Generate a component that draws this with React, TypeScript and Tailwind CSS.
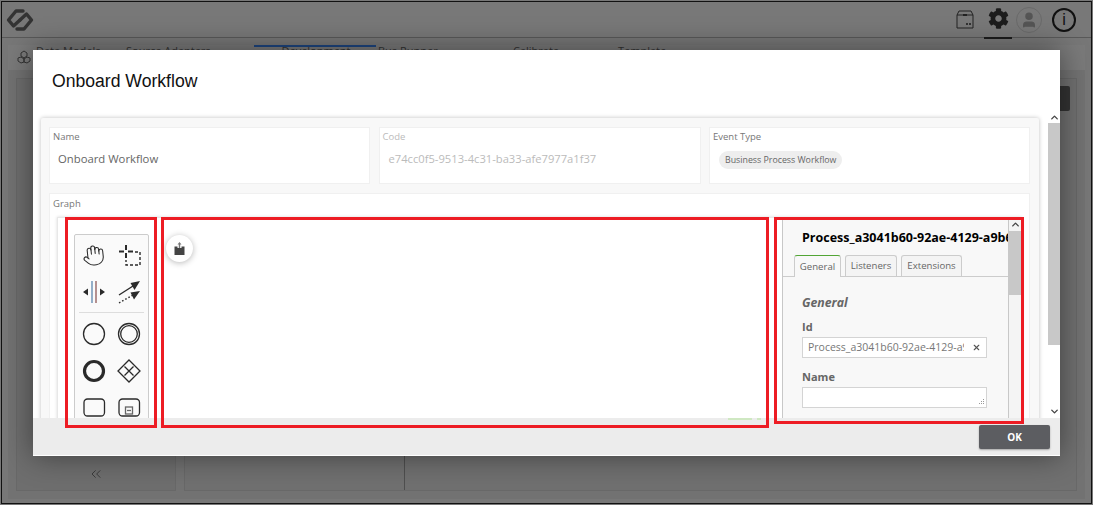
import React from "react";
import { Hand, ChevronsLeft, ChevronUp, ChevronDown, X, User } from "lucide-react";
import { FaCog } from "react-icons/fa";

function Field({ label, muted, children }: { label: string; muted?: boolean; children: React.ReactNode }) {
  return (
    <div className="h-[57px] border border-[#f0f0f0] bg-white pl-[3px] pt-[2px]">
      <div className={`text-[9.5px] leading-[13px] ${muted ? "text-[#bbb]" : "text-[#777]"}`}>{label}</div>
      {children}
    </div>
  );
}

function Tool({ children }: { children: React.ReactNode }) {
  return (
    <svg width="30" height="30" viewBox="0 0 30 30" fill="none" stroke="#2a2a2a" strokeWidth="1.3">
      {children}
    </svg>
  );
}

function Palette() {
  return (
    <div className="ml-[16px] mt-[16px] h-[200px] w-[75px] shrink-0 rounded-[2px] border border-[#ccc] bg-[#fafafa] pt-[5px]">
      <div className="grid grid-cols-2 justify-items-center gap-y-[7px] px-px">
        <div className="flex h-[30px] items-center justify-center">
          <Hand size={23} strokeWidth={1.1} color="#2a2a2a" className="-rotate-6" />
        </div>
        <Tool>
          <path d="M12 5v5M12 13v5M5 11.5h5M14 11.5h5" strokeWidth="2" />
          <path d="M21 12h5v13H12v-5" strokeDasharray="3 2" strokeWidth="1.4" />
        </Tool>
        <Tool>
          <path d="M13 4v22" stroke="#3f6f9f" strokeWidth="1.1" />
          <path d="M17 4v22" stroke="#7a3a3a" strokeWidth="1.1" />
          <path d="M9 15H6M21 15h3" strokeWidth="1.6" />
          <path d="M4 15l5-3.5v7zM26 15l-5-3.5v7z" fill="#2a2a2a" stroke="none" />
        </Tool>
        <Tool>
          <path d="M5 18L19 9" strokeWidth="1.4" />
          <path d="M26 4l-9.5 2 4 7z" fill="#2a2a2a" stroke="none" />
          <path d="M5 26L19 18" strokeDasharray="1.6 2" strokeWidth="1.4" />
          <path d="M26 14l-9.5 1.5 3.5 7z" fill="#2a2a2a" stroke="none" />
        </Tool>
      </div>
      <div className="mx-[4px] mt-[5px] h-px bg-[#ddd]" />
      <div className="mt-[6px] grid grid-cols-2 justify-items-center gap-y-[7px] px-px">
        <Tool><circle cx="15" cy="15" r="10.5" /></Tool>
        <Tool>
          <circle cx="15" cy="15" r="10.5" />
          <circle cx="15" cy="15" r="8.3" />
        </Tool>
        <Tool><circle cx="15" cy="15" r="9.5" strokeWidth="3.2" /></Tool>
        <Tool>
          <path d="M15 4l11 11-11 11L4 15z" />
          <path d="M10.5 10.5l9 9M19.5 10.5l-9 9" />
        </Tool>
        <Tool><rect x="5" y="6" width="20.5" height="17" rx="3.5" /></Tool>
        <Tool>
          <rect x="5" y="6" width="20.5" height="17" rx="3.5" />
          <rect x="11.5" y="14" width="7" height="7" stroke="#666" />
          <path d="M13 17.5h4" stroke="#666" />
        </Tool>
      </div>
    </div>
  );
}

function Canvas() {
  return (
    <div className="relative min-w-0 flex-1 bg-white">
      <div className="absolute left-[17px] top-[17px] flex h-[27px] w-[27px] items-center justify-center rounded-full bg-white shadow-[0_1px_6px_rgba(0,0,0,0.28)]">
        <svg width="11" height="13" viewBox="0 0 11 13">
          <path d="M0.5 4.5h3v1.5h4V4.5h3V13h-10z" fill="#444" />
          <path d="M5.5 0L3.5 2.5h1.3V6h1.4V2.5h1.3z" fill="#777" />
        </svg>
      </div>
    </div>
  );
}

function PropTab({ label, className, active }: { label: string; className: string; active?: boolean }) {
  return (
    <div
      className={`flex items-center justify-center rounded-t-[3px] pt-px text-[9.6px] text-[#666] ${className} ${
        active
          ? "-mb-px h-[22px] border border-b-0 border-[#ccc] border-t-[#52a535] bg-[#f8f8f8]"
          : "h-[21px] border border-b-0 border-[#ccc] bg-[#f4f4f4]"
      }`}
    >
      {label}
    </div>
  );
}

function Properties() {
  return (
    <div className="flex h-full w-[240px] shrink-0 border-x border-[#c8c8c8] bg-[#f8f8f8]">
      <div className="min-w-0 flex-1 overflow-hidden">
        <div className="overflow-hidden whitespace-nowrap pl-[19px] pt-[11px] text-[12.5px] font-bold leading-[18px] text-black">
          Process_a3041b60-92ae-4129-a9b6c
        </div>
        <div className="mt-[7px] flex h-[23px] items-end gap-[4px] border-b border-[#ccc] pl-[11px]">
          <PropTab label="General" className="w-[47px]" active />
          <PropTab label="Listeners" className="w-[52px]" />
          <PropTab label="Extensions" className="w-[61px]" />
        </div>
        <div className="px-[19px]">
          <div className="pt-[17px] text-[12.3px] font-bold italic leading-[18px] text-[#666]">General</div>
          <div className="mt-[8px] text-[11px] font-bold leading-[14px] text-[#666]">Id</div>
          <div className="mt-[3px] flex h-[21px] w-[185px] items-center border border-[#d4d4d4] bg-white pl-[5px] pr-[5px]">
            <div className="min-w-0 flex-1 overflow-hidden whitespace-nowrap text-[10.5px] text-[#777]">
              Process_a3041b60-92ae-4129-a9b6c
            </div>
            <X size={9} strokeWidth={3} color="#555" className="ml-[8px] shrink-0" />
          </div>
          <div className="mt-[12px] text-[11px] font-bold leading-[14px] text-[#666]">Name</div>
          <div className="relative mt-[3px] h-[21px] w-[185px] border border-[#d4d4d4] bg-white">
            <svg width="8" height="8" viewBox="0 0 8 8" className="absolute bottom-[1px] right-[1px]">
              <path d="M6 1h1v1H6zM6 3h1v1H6zM4 3h1v1H4zM6 5h1v1H6zM4 5h1v1H4zM2 5h1v1H2z" fill="#999" />
            </svg>
          </div>
        </div>
      </div>
      <div className="flex w-[13px] shrink-0 flex-col items-center border-l border-[#c8c8c8] bg-[#f4f4f4]">
        <ChevronUp size={11} strokeWidth={3} color="#444" className="h-[13px] shrink-0" />
        <div className="h-[64px] w-full bg-[#c8c8c8]" />
      </div>
    </div>
  );
}

function Modal() {
  return (
    <div className="absolute left-[33px] top-[50px] flex h-[406px] w-[1027px] flex-col bg-white shadow-[0_0_28px_rgba(0,0,0,0.45)]">
      <div className="flex h-[60px] shrink-0 items-center pl-[19px] pt-[2px] font-['Liberation_Sans',sans-serif] text-[17.6px] text-[#111]">
        Onboard Workflow
      </div>
      <div className="flex min-h-0 flex-1 overflow-hidden font-['Open_Sans',sans-serif]">
        <div className="min-w-0 flex-1 pl-[8px] pr-[8px] pt-[8px]">
          <div className="h-[400px] w-[998px] rounded-[2px] bg-[#f8f8f8] pl-[8px] pr-[9px] pt-[9px] shadow-[0_0_4px_rgba(0,0,0,0.25)]">
            <div className="grid grid-cols-[321px_322px_321px] justify-between">
              <Field label="Name">
                <div className="pl-[5px] pt-[8px] text-[11.3px] leading-[16px] text-[#666]">Onboard Workflow</div>
              </Field>
              <Field label="Code" muted>
                <div className="pl-[6px] pt-[8px] text-[11.2px] leading-[16px] text-[#bbb]">e74cc0f5-9513-4c31-ba33-afe7977a1f37</div>
              </Field>
              <Field label="Event Type">
                <div className="ml-[6px] mt-[8px] inline-block rounded-full bg-[#eee] px-[6px] text-[8.8px] leading-[18px] text-[#666]">
                  Business Process Workflow
                </div>
              </Field>
            </div>
            <div className="mt-[9px] h-[300px] border border-[#f0f0f0] bg-white pl-[7px] pr-[7px] pt-[3px]">
              <div className="-ml-[4px] text-[9.5px] leading-[13px] text-[#777]">Graph</div>
              <div className="mt-[7px] flex h-[260px] border-l border-t border-[#e8e8e8] shadow-[0_0_3px_rgba(0,0,0,0.15)]">
                <Palette />
                <Canvas />
                <Properties />
              </div>
            </div>
          </div>
        </div>
        <div className="flex w-[12px] shrink-0 flex-col items-center bg-white">
          <ChevronUp size={11} strokeWidth={3} color="#444" className="mt-[2px] h-[11px] shrink-0" />
          <div className="h-[222px] w-full bg-[#c8c8c8]" />
          <ChevronDown size={11} strokeWidth={3} color="#444" className="mb-[1px] mt-auto h-[11px] shrink-0" />
        </div>
      </div>
      <div className="relative flex h-[38px] shrink-0 items-start justify-end border-b border-white bg-[#ececec] pr-[10px] pt-[7px]">
        <div className="absolute left-[695px] top-0 h-[2px] w-[24px] bg-[#cfe8c2]" />
        <div className="absolute left-[724px] top-0 h-[2px] w-[4px] bg-[#cfe8c2]" />
        <button className="h-[24px] w-[71px] rounded-[2px] bg-[#5c5d61] font-['Open_Sans',sans-serif] text-[10px] font-bold text-white shadow-[0_1px_2px_rgba(0,0,0,0.3)]">
          OK
        </button>
      </div>
    </div>
  );
}

function Background() {
  const tabs = [
    ["Data Models", "w-[90px]"],
    ["Source Adapters", "w-[130px]"],
    ["Development", "w-[122px]"],
    ["Bus Runner", "w-[135px]"],
    ["Calibrate", "w-[105px]"],
    ["Template", "w-[90px]"],
  ];
  return (
    <div className="flex h-full flex-col font-['Open_Sans',sans-serif]">
      <header className="flex h-[36px] shrink-0 items-center border-b border-[#595959] bg-[#787878]">
        <svg width="30" height="24" viewBox="0 0 30 24" fill="none" stroke="#333" strokeWidth="3.4" strokeLinejoin="round" strokeLinecap="round" className="ml-[3px]">
          <path d="M18 3H11L3.5 12 8.5 18 15 12" />
          <path d="M12 21H19L26.5 12 21.5 6 15 12" />
        </svg>
        <div className="ml-auto flex items-center">
          <svg width="18" height="19" viewBox="0 0 18 19" fill="none" stroke="#222" strokeWidth="1">
            <path d="M1 5l2-4h12l2 4v13H1z" />
            <path d="M1 5h16" />
            <path d="M7 5h4" strokeWidth="2" />
            <path d="M11 15v-2M14 15v-2" strokeWidth="1.6" />
          </svg>
          <div className="relative ml-[10px] flex h-[36px] w-[28px] items-center justify-center pb-[3px]">
            <FaCog size={21} color="#1c1c1c" />
            <div className="absolute -bottom-[1px] left-0 right-0 h-[2px] bg-[#1c1c1c]" />
          </div>
          <div className="ml-[4px] flex h-[26px] w-[26px] items-center justify-center overflow-hidden rounded-full border border-[#6a6a6a]">
            <User size={18} fill="#555" color="#555" />
          </div>
          <div className="ml-[10px] mr-[15px] flex h-[24px] w-[24px] items-center justify-center rounded-full border-2 border-[#111] font-['Liberation_Sans',sans-serif] text-[16px] text-[#111]">
            i
          </div>
        </div>
      </header>
      <div className="mx-[6px] mb-[4px] mt-[7px] flex min-h-0 flex-1 flex-col bg-[#727272] pb-[8px]">
        <div className="flex h-[25px] shrink-0 items-start bg-[#7a7a7a] pl-[9px]">
          <svg width="14" height="14" viewBox="0 0 14 14" fill="none" stroke="#333" strokeWidth="1" className="mt-[5px]">
            <path d="M7 1l3 2v3L7 8 4 6V3zM4 7l3 2v3l-3 1-3-2V8zM10 7l3 1v3l-3 2-3-1V9z" />
          </svg>
          <div className="ml-[3px] flex">
            {tabs.map(([t, w], i) => (
              <div
                key={t}
                className={`h-[25px] ${w} border-t-2 pl-[2px] text-[11px] leading-[8px] text-[#333] ${
                  i === 2 ? "border-[#1d4580] text-center" : "border-transparent"
                }`}
              >
                {t}
              </div>
            ))}
          </div>
        </div>
        <div className="flex min-h-0 flex-1 gap-[8px] px-[8px] pt-[8px]">
          <div className="flex w-[160px] shrink-0 items-end justify-center border border-[#686868] bg-[#6e6e6e] pb-[8px]">
            <ChevronsLeft size={16} strokeWidth={1.5} color="#3c3c3c" />
          </div>
          <div className="flex flex-1 border border-[#686868] bg-[#707070]">
            <div className="w-[220px] border-r border-[#4f4f4f]" />
          </div>
        </div>
      </div>
    </div>
  );
}

function Highlights() {
  return (
    <>
      <div className="pointer-events-none absolute left-[65px] top-[217px] h-[211px] w-[92px] border-[3px] border-[#ed1c24]" />
      <div className="pointer-events-none absolute left-[161px] top-[217px] h-[211px] w-[608px] border-[3px] border-[#ed1c24]" />
      <div className="pointer-events-none absolute left-[774px] top-[217px] h-[207px] w-[250px] border-[3px] border-[#ed1c24]" />
    </>
  );
}

export default function App() {
  return (
    <div className="relative h-[505px] w-[1093px] overflow-hidden bg-[#777] p-px">
      <div className="h-[503px] w-[1091px] border border-[#111]">
        <Background />
      </div>
      <div className="absolute left-[1060px] top-[86px] h-[25px] w-[10px] rounded-r-[2px] bg-[#333]" />
      <Modal />
      <Highlights />
    </div>
  );
}
